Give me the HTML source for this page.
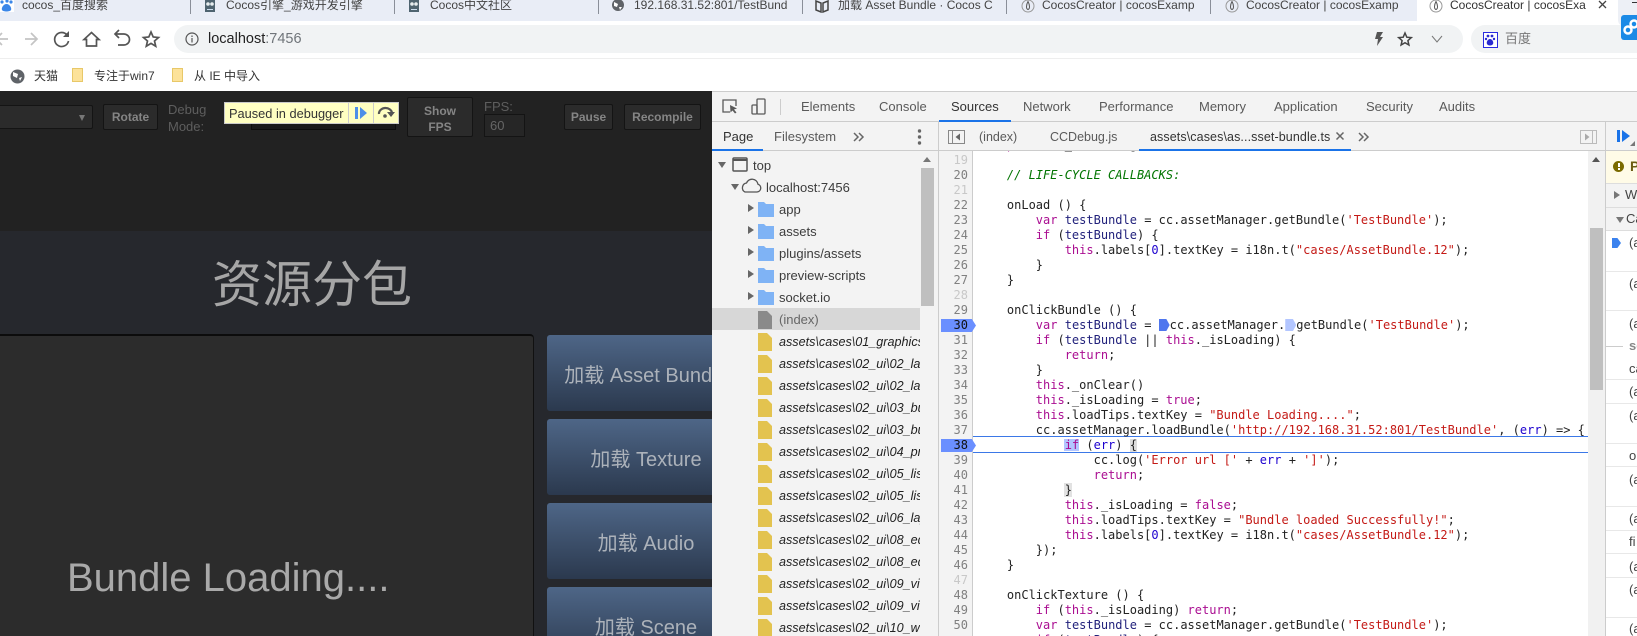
<!DOCTYPE html>
<html><head><meta charset="utf-8"><style>
html,body{margin:0;padding:0;background:#fff}
#r{position:relative;width:1637px;height:636px;overflow:hidden;font-family:"Liberation Sans","Noto Sans CJK SC",sans-serif;font-size:12px;color:#333}
.a{position:absolute}
.t{position:absolute;white-space:nowrap;line-height:16px}
.b{position:absolute;background:#2b2b2b;border:1px solid #141414;border-radius:2px;box-sizing:border-box;color:#858585;font-weight:bold;text-align:center;font-size:12px}
.g{position:absolute;left:547px;width:198px;height:76px;border-radius:3px;background:linear-gradient(#4e6687,#2b394e);color:#acb2ba;font-size:20px;text-align:center;line-height:83px;white-space:nowrap}
.dt{position:absolute;top:99px;font-size:13px;color:#5a5a5a;line-height:16px;white-space:nowrap}
.st{position:absolute;font-size:12.5px;color:#5a5a5a;line-height:16px;top:129px;white-space:nowrap}
.tr{position:absolute;left:712px;width:208px;height:22px;overflow:hidden;font-size:13px;line-height:24px;color:#3c3c3c;white-space:nowrap}
.tr span{position:absolute;left:67px}
.tr i{font-style:italic;color:#222;font-size:12.6px}
.tr svg{position:absolute;left:46px;top:2px}
.ln{position:absolute;left:941px;width:27px;text-align:right;font:12px/15px "DejaVu Sans Mono",monospace;color:#808080}
.ln div{height:15px}
.ln .e{color:#c8c8c8}
pre{margin:0;position:absolute;left:978px;font:12px/15px "DejaVu Sans Mono",monospace;color:#222}
pre b{font-weight:normal}
.k{color:#aa0d91}.s{color:#c41a16}.n{color:#1c00cf}.c{color:#007400;font-style:italic}.v{color:#1f1f7a}.x{color:#1c00cf}
.m{display:inline-block;width:11px;height:12px;vertical-align:-2px;clip-path:polygon(0 0,70% 0,100% 50%,70% 100%,0 100%)}
.cs{position:absolute;left:1606px;width:31px;height:1px;background:#e8e8e8}
.cc{position:absolute;left:1629px;font-size:13px;line-height:16px;color:#444;white-space:nowrap}
</style></head><body><div id="r">

<!-- tab strip -->
<div class="a" style="left:0;top:0;width:1637px;height:21px;background:#e9edf6"></div>
<div class="a" style="left:1417px;top:0;width:201px;height:21px;background:#fff"></div>
<div class="a" style="left:1618px;top:0;width:19px;height:26px;background:#edf0f6;border-bottom-left-radius:6px"></div>
<div class="a" style="left:1632px;top:2px;width:5px;height:1px;background:#333"></div>
<div class="a" style="left:190px;top:0;width:1px;height:14px;background:#8a8f99"></div>
<div class="a" style="left:394px;top:0;width:1px;height:14px;background:#8a8f99"></div>
<div class="a" style="left:598px;top:0;width:1px;height:14px;background:#8a8f99"></div>
<div class="a" style="left:802px;top:0;width:1px;height:14px;background:#8a8f99"></div>
<div class="a" style="left:1006px;top:0;width:1px;height:14px;background:#8a8f99"></div>
<div class="a" style="left:1210px;top:0;width:1px;height:14px;background:#8a8f99"></div>
<svg class="a" style="left:0;top:0" width="14" height="12"><rect width="14" height="12" fill="#fff"/><g fill="#3a86e8"><circle cx="2" cy="2" r="1.600"/><circle cx="7" cy="1" r="1.600"/><circle cx="11" cy="2" r="1.600"/><path d="M6.500 4C3.500 4 1 8 2 10s8 2 9 0-1.500-6-4.500-6z"/></g></svg>
<div class="t" style="left:22px;top:-3px;color:#444">cocos_百度搜索</div>
<svg class="a" style="left:204px;top:0" width="12" height="13"><rect x="1" width="10" height="12" fill="#4f6470"/><circle cx="4" cy="4" r="1.800" fill="#e8eef0"/><circle cx="8" cy="4" r="1.800" fill="#e8eef0"/><rect x="3" y="9" width="6" height="1" fill="#cde"/></svg>
<div class="t" style="left:226px;top:-3px;color:#444">Cocos引擎_游戏开发引擎</div>
<svg class="a" style="left:408px;top:0" width="12" height="13"><rect x="1" width="10" height="12" fill="#4f6470"/><circle cx="4" cy="4" r="1.800" fill="#e8eef0"/><circle cx="8" cy="4" r="1.800" fill="#e8eef0"/><rect x="3" y="9" width="6" height="1" fill="#cde"/></svg>
<div class="t" style="left:430px;top:-3px;color:#444">Cocos中文社区</div>
<svg class="a" style="left:611px;top:0" width="14" height="13"><circle cx="7" cy="5" r="6" fill="#5f6368"/><path d="M3 2l4 2-1 3-3-1zM8 7l3 0-2 3z" fill="#fff"/></svg>
<div class="t" style="left:634px;top:-3px;width:160px;overflow:hidden;color:#444">192.168.31.52:801/TestBund</div>
<svg class="a" style="left:815px;top:0" width="14" height="13"><path d="M1 1v9l5 2V3zM13 1v9l-5 2V3z" fill="none" stroke="#444" stroke-width="1.5"/></svg>
<div class="t" style="left:838px;top:-3px;width:160px;overflow:hidden;color:#444">加载 Asset Bundle · Cocos C</div>
<svg class="a" style="left:1021px;top:0" width="14" height="13"><circle cx="7" cy="6" r="6" fill="none" stroke="#999"/><path d="M7 1.5C5 5 5 9 7 9.500C9 9 9 5 7 1.500Z" fill="none" stroke="#555"/></svg>
<div class="t" style="left:1042px;top:-3px;width:160px;overflow:hidden;color:#444">CocosCreator | cocosExamp</div>
<svg class="a" style="left:1225px;top:0" width="14" height="13"><circle cx="7" cy="6" r="6" fill="none" stroke="#999"/><path d="M7 1.5C5 5 5 9 7 9.500C9 9 9 5 7 1.500Z" fill="none" stroke="#555"/></svg>
<div class="t" style="left:1246px;top:-3px;width:160px;overflow:hidden;color:#444">CocosCreator | cocosExamp</div>
<svg class="a" style="left:1429px;top:0" width="14" height="13"><circle cx="7" cy="6" r="6" fill="none" stroke="#999"/><path d="M7 1.5C5 5 5 9 7 9.500C9 9 9 5 7 1.500Z" fill="none" stroke="#555"/></svg>
<div class="t" style="left:1450px;top:-3px;width:138px;overflow:hidden;color:#333">CocosCreator | cocosExa</div>
<svg class="a" style="left:1597px;top:0" width="12" height="10"><path d="M2 1l7 7M9 1L2 8" stroke="#444" stroke-width="1.3"/></svg>

<!-- address row -->
<svg class="a" style="left:0;top:29px" width="170" height="20" fill="none" stroke="#5f6368" stroke-width="1.7">
<path d="M-4 10H8M2 4L-4 10l6 6" stroke="#c4c4c4"/>
<path d="M25 10H37M31 4l6 6-6 6" stroke="#c4c4c4"/>
<path d="M67 6a7 7 0 1 0 1.500 6" stroke="#555"/><path d="M69 2v6h-6z" fill="#555" stroke="none"/>
<path d="M91.500 3.500l7.500 7h-2.500v6.500h-10v-6.500H84z" stroke="#555"/>
<path d="M116 5h8a4.500 4.500 0 0 1 0 11h-6M119 1l-4 4 4 4" stroke="#555"/>
<path d="M151 3l2.200 5 5.300.5-4 3.500 1.200 5.200-4.700-2.800-4.700 2.800 1.200-5.200-4-3.500 5.300-.5z" stroke="#555"/>
</svg>
<div class="a" style="left:174px;top:25px;width:1289px;height:28px;border-radius:14px;background:#f1f3f4"></div>
<div class="a" style="left:1471px;top:25px;width:180px;height:28px;border-radius:14px;background:#f1f3f4"></div>
<svg class="a" style="left:185px;top:32px" width="14" height="14" fill="none" stroke="#555" stroke-width="1.2"><circle cx="7" cy="7" r="6"/><path d="M7 6v4.500M7 3.500v1.500"/></svg>
<div class="t" style="left:208px;top:31px;font-size:14.500px;color:#222">localhost<span style="color:#70757a">:7456</span></div>
<svg class="a" style="left:1372px;top:31px" width="80" height="16">
<path d="M5 1h6L8 6h3l-6 9 1-7H3z" fill="#555"/>
<path d="M33 2l1.800 4.200 4.500.4-3.400 3 1 4.400-3.900-2.300-3.900 2.300 1-4.400-3.400-3 4.500-.4z" fill="none" stroke="#444" stroke-width="1.500"/>
<path d="M60 5l5 6 5-6" fill="none" stroke="#777" stroke-width="1"/></svg>
<div class="a" style="left:1483px;top:32px;width:13px;height:14px;border:1px solid #2a2ae0;background:#fff"></div>
<svg class="a" style="left:1484px;top:33px" width="13" height="14" fill="#2a2ad0"><circle cx="4" cy="3" r="1.400"/><circle cx="8" cy="3" r="1.400"/><circle cx="2" cy="6" r="1.200"/><circle cx="10" cy="6" r="1.200"/><path d="M6 6c-2 0-4 3-3 5s5 2 6 0-1-5-3-5z"/></svg>
<div class="t" style="left:1505px;top:31px;font-size:13px;color:#777">百度</div>
<div class="a" style="left:1621px;top:15px;width:16px;height:25px;background:#1b8ae6;border-radius:3px 0 0 3px"></div>
<svg class="a" style="left:1621px;top:15px" width="16" height="25" fill="none" stroke="#fff" stroke-width="2.500"><circle cx="7" cy="15" r="3.500"/><circle cx="13" cy="9" r="3.500"/></svg>
<div class="a" style="left:0;top:58px;width:1637px;height:1px;background:#eee"></div>

<!-- bookmarks -->
<svg class="a" style="left:10px;top:69px" width="15" height="15"><circle cx="7.500" cy="7.500" r="7" fill="#5f6368"/><path d="M3 3l5 2-1 4-4-2zM9 9l3-1-2 4z" fill="#fff"/></svg>
<div class="t" style="left:34px;top:68px;color:#333">天猫</div>
<div class="a" style="left:72px;top:68px;width:11px;height:14px;background:#fce29a;border:1px solid #e8c868;box-sizing:border-box"></div>
<div class="t" style="left:94px;top:68px;color:#333">专注于win7</div>
<div class="a" style="left:172px;top:68px;width:11px;height:14px;background:#fce29a;border:1px solid #e8c868;box-sizing:border-box"></div>
<div class="t" style="left:194px;top:68px;color:#333">从 IE 中导入</div>

<!-- game page -->
<div class="a" style="left:0;top:91px;width:712px;height:140px;background:#222"></div>
<div class="a" style="left:0;top:231px;width:712px;height:405px;background:#26282d"></div>
<div class="b" style="left:-4px;top:105px;width:97px;height:24px"></div>
<div class="a" style="left:79px;top:115px;border-left:3.500px solid transparent;border-right:3.500px solid transparent;border-top:6px solid #777"></div>
<div class="b" style="left:103px;top:104px;width:55px;height:26px;line-height:24px">Rotate</div>
<div class="t" style="left:168px;top:102px;color:#5e5e5e;font-size:13px">Debug</div>
<div class="t" style="left:168px;top:119px;color:#5e5e5e;font-size:13px">Mode:</div>
<div class="a" style="left:251px;top:110px;width:145px;height:20px;background:#1a1a1a;border:1px solid #0d0d0d;box-sizing:border-box"></div>
<div class="b" style="left:407px;top:97px;width:66px;height:40px;line-height:16px;padding-top:5px">Show<br>FPS</div>
<div class="t" style="left:484px;top:99px;color:#5e5e5e;font-size:13px">FPS:</div>
<div class="a" style="left:484px;top:114px;width:41px;height:23px;background:#262626;border:1px solid #141414;box-sizing:border-box"></div>
<div class="t" style="left:490px;top:118px;color:#666;font-size:13px">60</div>
<div class="b" style="left:564px;top:104px;width:49px;height:26px;line-height:24px">Pause</div>
<div class="b" style="left:624px;top:104px;width:77px;height:26px;line-height:24px">Recompile</div>

<div class="a" style="left:224px;top:102px;width:175px;height:22px;background:#ffffc2;border:1px solid #c9c9c9;box-sizing:border-box"></div>
<div class="t" style="left:229px;top:106px;font-size:12.8px;color:#333">Paused in debugger</div>
<div class="a" style="left:348px;top:103px;width:1px;height:20px;background:#ccc"></div>
<div class="a" style="left:373px;top:103px;width:1px;height:20px;background:#ccc"></div>
<svg class="a" style="left:354px;top:106px" width="14" height="14" fill="#4d8fe8"><rect x="1" y="1" width="3" height="12"/><path d="M6 1l7 6-7 6z"/></svg>
<svg class="a" style="left:376px;top:105px" width="20" height="14"><path d="M3 9a6.500 5.500 0 0 1 13-1" fill="none" stroke="#555" stroke-width="2.200"/><path d="M11 7h8l-4 5z" fill="#555"/><circle cx="9" cy="11" r="1.800" fill="#555"/></svg>

<div class="t" style="left:212px;top:255px;width:200px;line-height:60px;font-size:50px;color:#a6a6a6;letter-spacing:0">资源分包</div>
<div class="a" style="left:-6px;top:334px;width:540px;height:320px;background:#2c2c2c;border:1px solid #111;border-top:2px solid #0c0c0c;border-radius:4px;box-sizing:border-box"></div>
<div class="t" style="left:67px;top:555px;line-height:46px;font-size:40px;color:#a9a9a9">Bundle Loading....</div>
<div class="g" style="top:335px">加载 Asset Bundle</div>
<div class="g" style="top:419px">加载 Texture</div>
<div class="g" style="top:503px">加载 Audio</div>
<div class="g" style="top:587px">加载 Scene</div>

<!-- devtools -->
<div class="a" style="left:712px;top:91px;width:925px;height:545px;background:#f3f3f3"></div>
<div class="a" style="left:712px;top:91px;width:925px;height:1px;background:#ccc"></div>
<div class="a" style="left:712px;top:121px;width:925px;height:1px;background:#ccc"></div>
<svg class="a" style="left:721px;top:98px" width="50" height="18" fill="none" stroke="#5a5a5a" stroke-width="1.300"><path d="M9 14H2V2h13v6"/><path d="M9 7l7 3.500-3 1 2.500 3-1.500 1-2.500-3-2 2z" fill="#5a5a5a" stroke="none"/><rect x="36" y="1" width="8" height="15" rx="1"/><rect x="31" y="7" width="5" height="9" rx="1"/></svg>
<div class="a" style="left:780px;top:99px;width:1px;height:16px;background:#ccc"></div>
<div class="dt" style="left:801px">Elements</div>
<div class="dt" style="left:879px">Console</div>
<div class="dt" style="left:951px;color:#333">Sources</div>
<div class="dt" style="left:1023px">Network</div>
<div class="dt" style="left:1099px">Performance</div>
<div class="dt" style="left:1199px">Memory</div>
<div class="dt" style="left:1274px">Application</div>
<div class="dt" style="left:1366px">Security</div>
<div class="dt" style="left:1439px">Audits</div>
<div class="a" style="left:939px;top:120px;width:72px;height:2px;background:#1a73e8"></div>

<!-- left nav -->
<div class="a" style="left:712px;top:150px;width:226px;height:1px;background:#ccc"></div>
<div class="a" style="left:938px;top:122px;width:1px;height:514px;background:#ccc"></div>
<div class="st" style="left:723px;font-size:13px;color:#333">Page</div>
<div class="st" style="left:774px;font-size:13px">Filesystem</div>
<div class="a" style="left:712px;top:149px;width:51px;height:2px;background:#1a73e8"></div>
<svg class="a" style="left:853px;top:131px" width="12" height="12" fill="none" stroke="#666" stroke-width="1.500"><path d="M1 2l4 4-4 4M6 2l4 4-4 4"/></svg>
<svg class="a" style="left:917px;top:128px" width="5" height="18" fill="#666"><circle cx="2.500" cy="3" r="1.700"/><circle cx="2.500" cy="9" r="1.700"/><circle cx="2.500" cy="15" r="1.700"/></svg>

<div class="a" style="left:712px;top:308px;width:208px;height:22px;background:#d7d7d7"></div>
<svg class="a" style="left:718px;top:155px" width="60" height="20"><path d="M0 7h8l-4 6z" fill="#666"/><rect x="15" y="3" width="14" height="13" rx="1" fill="none" stroke="#555" stroke-width="1.500"/><path d="M15 5h14" stroke="#555" stroke-width="2"/></svg>
<div class="t" style="left:753px;top:158px;font-size:13px;color:#3c3c3c">top</div>
<svg class="a" style="left:731px;top:177px" width="36" height="20"><path d="M0 7h8l-4 6z" fill="#666"/><path d="M14 15h12a4 4 0 0 0 1-7.800A6 6 0 0 0 15.500 6 4.800 4.800 0 0 0 14 15z" fill="none" stroke="#555" stroke-width="1.300"/></svg>
<div class="t" style="left:766px;top:180px;font-size:13px;color:#3c3c3c">localhost:7456</div>

<div class="tr" style="top:198px"><svg width="30" height="18" style="left:36px"><path d="M0 4l6 4-6 4z" fill="#666"/><path d="M10 2h6l2 2h8v13H10z" fill="#7fb3f5"/></svg><span>app</span></div>
<div class="tr" style="top:220px"><svg width="30" height="18" style="left:36px"><path d="M0 4l6 4-6 4z" fill="#666"/><path d="M10 2h6l2 2h8v13H10z" fill="#7fb3f5"/></svg><span>assets</span></div>
<div class="tr" style="top:242px"><svg width="30" height="18" style="left:36px"><path d="M0 4l6 4-6 4z" fill="#666"/><path d="M10 2h6l2 2h8v13H10z" fill="#7fb3f5"/></svg><span>plugins/assets</span></div>
<div class="tr" style="top:264px"><svg width="30" height="18" style="left:36px"><path d="M0 4l6 4-6 4z" fill="#666"/><path d="M10 2h6l2 2h8v13H10z" fill="#7fb3f5"/></svg><span>preview-scripts</span></div>
<div class="tr" style="top:286px"><svg width="30" height="18" style="left:36px"><path d="M0 4l6 4-6 4z" fill="#666"/><path d="M10 2h6l2 2h8v13H10z" fill="#7fb3f5"/></svg><span>socket.io</span></div>
<div class="tr" style="top:308px;color:#666"><svg width="14" height="19"><path d="M0 1h9l5 5v13H0z" fill="#8a8a8a"/></svg><span>(index)</span></div>

<div class="tr" style="top:330px"><svg width="14" height="19"><path d="M0 1h9l5 5v13H0z" fill="#e3c34f"/></svg><span><i>assets\cases\01_graphics</i></span></div>
<div class="tr" style="top:352px"><svg width="14" height="19"><path d="M0 1h9l5 5v13H0z" fill="#e3c34f"/></svg><span><i>assets\cases\02_ui\02_label</i></span></div>
<div class="tr" style="top:374px"><svg width="14" height="19"><path d="M0 1h9l5 5v13H0z" fill="#e3c34f"/></svg><span><i>assets\cases\02_ui\02_label</i></span></div>
<div class="tr" style="top:396px"><svg width="14" height="19"><path d="M0 1h9l5 5v13H0z" fill="#e3c34f"/></svg><span><i>assets\cases\02_ui\03_button</i></span></div>
<div class="tr" style="top:418px"><svg width="14" height="19"><path d="M0 1h9l5 5v13H0z" fill="#e3c34f"/></svg><span><i>assets\cases\02_ui\03_button</i></span></div>
<div class="tr" style="top:440px"><svg width="14" height="19"><path d="M0 1h9l5 5v13H0z" fill="#e3c34f"/></svg><span><i>assets\cases\02_ui\04_progress</i></span></div>
<div class="tr" style="top:462px"><svg width="14" height="19"><path d="M0 1h9l5 5v13H0z" fill="#e3c34f"/></svg><span><i>assets\cases\02_ui\05_list</i></span></div>
<div class="tr" style="top:484px"><svg width="14" height="19"><path d="M0 1h9l5 5v13H0z" fill="#e3c34f"/></svg><span><i>assets\cases\02_ui\05_list</i></span></div>
<div class="tr" style="top:506px"><svg width="14" height="19"><path d="M0 1h9l5 5v13H0z" fill="#e3c34f"/></svg><span><i>assets\cases\02_ui\06_layout</i></span></div>
<div class="tr" style="top:528px"><svg width="14" height="19"><path d="M0 1h9l5 5v13H0z" fill="#e3c34f"/></svg><span><i>assets\cases\02_ui\08_editbox</i></span></div>
<div class="tr" style="top:550px"><svg width="14" height="19"><path d="M0 1h9l5 5v13H0z" fill="#e3c34f"/></svg><span><i>assets\cases\02_ui\08_editbox</i></span></div>
<div class="tr" style="top:572px"><svg width="14" height="19"><path d="M0 1h9l5 5v13H0z" fill="#e3c34f"/></svg><span><i>assets\cases\02_ui\09_video</i></span></div>
<div class="tr" style="top:594px"><svg width="14" height="19"><path d="M0 1h9l5 5v13H0z" fill="#e3c34f"/></svg><span><i>assets\cases\02_ui\09_video</i></span></div>
<div class="tr" style="top:616px"><svg width="14" height="19"><path d="M0 1h9l5 5v13H0z" fill="#e3c34f"/></svg><span><i>assets\cases\02_ui\10_webview</i></span></div>

<div class="a" style="left:921px;top:168px;width:13px;height:138px;background:#bfbfbf"></div>
<div class="a" style="left:923px;top:157px;border-left:4.500px solid transparent;border-right:4.500px solid transparent;border-bottom:5px solid #777"></div>

<!-- editor header -->
<div class="a" style="left:939px;top:150px;width:698px;height:1px;background:#ccc"></div>
<svg class="a" style="left:948px;top:130px" width="17" height="14" fill="none" stroke="#888"><rect x=".5" y=".5" width="16" height="13"/><path d="M4.500 1v12"/><path d="M12 3.500v7L7.500 7z" fill="#666" stroke="none"/></svg>
<div class="st" style="left:979px">(index)</div>
<div class="st" style="left:1050px">CCDebug.js</div>
<div class="st" style="left:1150px;color:#333;letter-spacing:.1px">assets\cases\as...sset-bundle.ts</div>
<svg class="a" style="left:1335px;top:131px" width="10" height="10"><path d="M1.500 1.500l7 7M8.500 1.500l-7 7" stroke="#666" stroke-width="1.500"/></svg>
<div class="a" style="left:1139px;top:149px;width:212px;height:2px;background:#1a73e8"></div>
<svg class="a" style="left:1358px;top:131px" width="12" height="12" fill="none" stroke="#666" stroke-width="1.500"><path d="M1 2l4 4-4 4M6 2l4 4-4 4"/></svg>
<svg class="a" style="left:1580px;top:130px" width="17" height="14" fill="none" stroke="#bbb"><rect x=".5" y=".5" width="16" height="13"/><path d="M12.500 1v12"/><path d="M5 3.500v7L9.500 7z" fill="#aaa" stroke="none"/></svg>

<!-- editor -->
<div class="a" style="left:939px;top:151px;width:649px;height:485px;background:#fff"></div>
<div class="a" style="left:939px;top:151px;width:33px;height:485px;background:#f3f3f3"></div>
<div class="a" style="left:972px;top:151px;width:1px;height:485px;background:#ccc"></div>
<div class="a" style="left:973px;top:436px;width:615px;height:17px;box-sizing:border-box;border-top:1px solid #3b78e7;border-bottom:1px solid #3b78e7"></div>
<div class="a" style="left:941px;top:319px;width:35px;height:13px;background:#6a8fff;clip-path:polygon(0 0,88% 0,100% 50%,88% 100%,0 100%)"></div>
<div class="a" style="left:941px;top:439px;width:35px;height:13px;background:#6a8fff;clip-path:polygon(0 0,88% 0,100% 50%,88% 100%,0 100%)"></div>
<div class="a" style="left:1064px;top:439px;width:15px;height:12px;background:#b3c6ff"></div>
<div class="a" style="left:1130px;top:439px;width:7px;height:13px;background:#ddd"></div>
<div class="a" style="left:1064px;top:483px;width:8px;height:14px;background:#e2e2e2"></div>

<div class="a" style="left:939px;top:151px;width:649px;height:485px;overflow:hidden">
<div class="ln" style="left:2px;top:-13px"><div class="e"></div><div class="e">19</div><div>20</div><div class="e">21</div><div>22</div><div>23</div><div>24</div><div>25</div><div>26</div><div>27</div><div class="e">28</div><div>29</div><div style="color:#111">30</div><div>31</div><div>32</div><div>33</div><div>34</div><div>35</div><div>36</div><div>37</div><div style="color:#111">38</div><div>39</div><div>40</div><div>41</div><div>42</div><div>43</div><div>44</div><div>45</div><div>46</div><div class="e">47</div><div>48</div><div>49</div><div>50</div></div>
<pre style="left:39px;top:-13px">    <span class="k">private</span> _isLoading = <span class="k">false</span>;

    <span class="c">// LIFE-CYCLE CALLBACKS:</span>

    onLoad () {
        <span class="k">var</span> <span class="v">testBundle</span> = cc.assetManager.getBundle(<span class="s">'TestBundle'</span>);
        <span class="k">if</span> (<span class="v">testBundle</span>) {
            <span class="k">this</span>.labels[<span class="n">0</span>].textKey = i18n.t(<span class="s">"cases/AssetBundle.12"</span>);
        }
    }

    onClickBundle () {
        <span class="k">var</span> <span class="v">testBundle</span> = <span class="m" style="background:#4f76ee"></span>cc.assetManager.<span class="m" style="background:#b3c6ff"></span>getBundle(<span class="s">'TestBundle'</span>);
        <span class="k">if</span> (<span class="v">testBundle</span> || <span class="k">this</span>._isLoading) {
            <span class="k">return</span>;
        }
        <span class="k">this</span>._onClear()
        <span class="k">this</span>._isLoading = <span class="k">true</span>;
        <span class="k">this</span>.loadTips.textKey = <span class="s">"Bundle Loading...."</span>;
        cc.assetManager.loadBundle(<span class="s">'http://192.168.31.52:801/TestBundle'</span>, (<span class="x">err</span>) =&gt; {
            <span class="k">if</span> (<span class="x">err</span>) {
                cc.log(<span class="s">'Error url ['</span> + <span class="x">err</span> + <span class="s">']'</span>);
                <span class="k">return</span>;
            }
            <span class="k">this</span>._isLoading = <span class="k">false</span>;
            <span class="k">this</span>.loadTips.textKey = <span class="s">"Bundle loaded Successfully!"</span>;
            <span class="k">this</span>.labels[<span class="n">0</span>].textKey = i18n.t(<span class="s">"cases/AssetBundle.12"</span>);
        });
    }

    onClickTexture () {
        <span class="k">if</span> (<span class="k">this</span>._isLoading) <span class="k">return</span>;
        <span class="k">var</span> <span class="v">testBundle</span> = cc.assetManager.getBundle(<span class="s">'TestBundle'</span>);
        <span class="k">if</span> (<span class="v">testBundle</span>) {</pre>
</div>

<!-- editor scrollbar -->
<div class="a" style="left:1588px;top:151px;width:17px;height:485px;background:#f1f1f1"></div>
<div class="a" style="left:1590px;top:228px;width:13px;height:162px;background:#bfbfbf"></div>
<div class="a" style="left:1592px;top:157px;border-left:4.500px solid transparent;border-right:4.500px solid transparent;border-bottom:5px solid #555"></div>
<div class="a" style="left:1605px;top:122px;width:1px;height:514px;background:#ccc"></div>

<!-- right panel -->
<div class="a" style="left:1606px;top:151px;width:31px;height:485px;background:#fff"></div>
<svg class="a" style="left:1616px;top:129px" width="21" height="18" fill="#1a73e8"><rect x="1" y="1" width="3" height="12"/><path d="M6 1l8 6-8 6z"/><path d="M14 17l5-5v5z" fill="#777"/></svg>
<div class="a" style="left:1606px;top:151px;width:31px;height:32px;background:#fffbe7"></div>
<div class="a" style="left:1606px;top:183px;width:31px;height:1px;background:#ddd"></div>
<div class="a" style="left:1613px;top:161px;width:11px;height:11px;border-radius:50%;background:#7a6a00"></div>
<div class="a" style="left:1617.500px;top:163px;width:2px;height:4px;background:#fff"></div>
<div class="a" style="left:1617.500px;top:168px;width:2px;height:2px;background:#fff"></div>
<div class="t" style="left:1630px;top:158px;font-size:14px;font-weight:bold;color:#6b5c10">P</div>
<div class="a" style="left:1606px;top:184px;width:31px;height:24px;background:#f3f3f3"></div>
<div class="a" style="left:1606px;top:207px;width:31px;height:1px;background:#ddd"></div>
<div class="a" style="left:1614px;top:191px;border-top:4.500px solid transparent;border-bottom:4.500px solid transparent;border-left:6px solid #777"></div>
<div class="t" style="left:1625px;top:187px;font-size:13px;color:#444">W</div>
<div class="a" style="left:1606px;top:208px;width:31px;height:22px;background:#f3f3f3"></div>
<div class="a" style="left:1606px;top:230px;width:31px;height:1px;background:#ddd"></div>
<div class="a" style="left:1616px;top:217px;border-left:4.500px solid transparent;border-right:4.500px solid transparent;border-top:6px solid #777"></div>
<div class="t" style="left:1626px;top:211px;font-size:13px;color:#444">Ca</div>
<div class="a" style="left:1612px;top:238px;width:9px;height:10px;background:#3b82ee;clip-path:polygon(0 0,60% 0,100% 50%,60% 100%,0 100%)"></div>
<div class="cc" style="top:235px">(a</div><div class="cs" style="top:271px"></div>
<div class="cc" style="top:276px">(a</div><div class="cs" style="top:310px"></div>
<div class="cc" style="top:316px">(a</div>
<div class="a" style="left:1606px;top:346px;width:17px;height:1px;background:#ccc"></div>
<div class="cc" style="top:338px;font-weight:bold;color:#888">se</div>
<div class="cc" style="top:361px">ca</div><div class="cs" style="top:379px"></div>
<div class="cc" style="top:384px">(a</div><div class="cs" style="top:403px"></div>
<div class="cc" style="top:408px">(a</div><div class="cs" style="top:443px"></div>
<div class="cc" style="top:448px">o</div><div class="cs" style="top:466px"></div>
<div class="cc" style="top:472px">(a</div><div class="cs" style="top:506px"></div>
<div class="cc" style="top:511px">(a</div><div class="cs" style="top:530px"></div>
<div class="cc" style="top:534px">fi</div><div class="cs" style="top:553px"></div>
<div class="cc" style="top:559px">(a</div><div class="cs" style="top:577px"></div>
<div class="cc" style="top:582px">(a</div><div class="cs" style="top:617px"></div>
<div class="cc" style="top:621px">(a</div>

</div></body></html>
